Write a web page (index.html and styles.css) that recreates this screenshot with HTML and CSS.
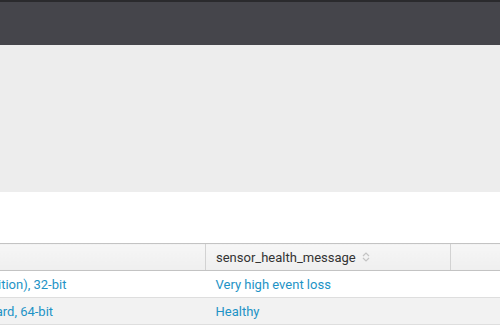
FILE: index.html
```html
<!DOCTYPE html>
<html>
<head>
    <title>Sensor Health</title>
    <link rel="stylesheet" href="styles.css">
</head>
<body>
<div class="topbar"></div>
<div class="panel"></div>
<div class="spacer"></div>

<div class="table-wrap">
    <table class="results">
        <colgroup>
            <col class="col-os">
            <col class="col-msg">
            <col class="col-extra">
        </colgroup>
        <thead>
            <tr>
                <th>os</th>
                <th>sensor_health_message
                    <svg class="sort" width="8" height="12" viewBox="0 0 8 12">
                        <path d="M1 5 L4 2 L7 5 M1 7 L4 10 L7 7" fill="none" stroke="#c4c4c4" stroke-width="1.2"/>
                    </svg>
                </th>
                <th></th>
            </tr>
        </thead>
        <tbody>
            <tr>
                <td><a href="#">Windows Server 2003 (Enterprise Edition), 32-bit</a></td>
                <td><a href="#">Very high event loss</a></td>
                <td></td>
            </tr>
            <tr class="odd">
                <td><a href="#">Windows Server 2008 R2 SP1 Standard, 64-bit</a></td>
                <td><a href="#">Healthy</a></td>
                <td></td>
            </tr>
            <tr>
                <td><a href="#">Windows 7 Professional, 64-bit</a></td>
                <td><a href="#">Healthy</a></td>
                <td></td>
            </tr>
        </tbody>
    </table>
</div>
</body>
</html>
```

FILE: styles.css
```css
body {
    margin: 0;
    font-family: Roboto, "Liberation Sans", sans-serif;
    font-size: 13px;
    color: #333;
    background: #fff;
    overflow: hidden;
}

.topbar {
    height: 43px;
    background-color: #45454b;
    border-top: 2px solid #2a2a2d;
}

.panel {
    height: 147px;
    background-color: #ededed;
}

.spacer {
    height: 51px;
    background: #fff;
}

.table-wrap {
    overflow: hidden;
    width: 500px;
}

.results {
    border-collapse: collapse;
    table-layout: fixed;
    width: 822px;
    margin-left: -222px;
}

.col-os {
    width: 427px;
}

.col-msg {
    width: 245px;
}

.results th {
    height: 26px;
    padding: 0 10px;
    text-align: left;
    font-weight: normal;
    color: #333;
    background: linear-gradient(#f6f6f6, #efefef);
    border-top: 1px solid #c3c3c3;
    border-bottom: 1px solid #c3c3c3;
    border-left: 1px solid #d2d2d2;
    white-space: nowrap;
}

.results td {
    height: 26px;
    padding: 0 10px;
    border-bottom: 1px solid #dedede;
    white-space: nowrap;
    overflow: hidden;
}

.results tr.odd td {
    background-color: #f2f2f2;
}

.results a {
    color: #1e93c6;
    text-decoration: none;
}

.sort {
    margin-left: 3px;
    vertical-align: -1px;
}
```
